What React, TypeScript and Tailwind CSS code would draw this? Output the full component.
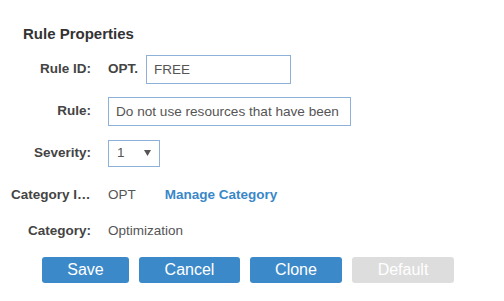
export default function App() {
    const font = { fontFamily: '"Liberation Sans", Arial, sans-serif' };

    return (
        <div className="w-[504px] h-[301px] bg-white text-[#444]" style={font}>
            <h2 className="pt-[25px] pl-[23px] h-[48px] text-[15px] leading-[18px] font-bold text-[#333]">
                Rule Properties
            </h2>

            <div className="flex flex-col pl-[11px]">
                <div className="flex items-center h-[42px]">
                    <span className="w-[80px] text-right text-[13.5px] font-bold">Rule ID:</span>
                    <span className="ml-[17px] text-[13.5px] font-bold">OPT.</span>
                    <input
                        readOnly
                        defaultValue="FREE"
                        className="ml-[8px] w-[145px] h-[29px] border border-[#8db1d8] px-[7px] text-[13.5px] text-[#555] outline-none"
                    />
                </div>

                <div className="flex items-center h-[42px]">
                    <span className="w-[80px] text-right text-[13.5px] font-bold">Rule:</span>
                    <input
                        readOnly
                        defaultValue="Do not use resources that have been"
                        className="ml-[17px] w-[243px] h-[29px] border border-[#8db1d8] px-[7px] text-[13.6px] text-[#555] outline-none"
                    />
                </div>

                <div className="flex items-center h-[42px]">
                    <span className="w-[80px] text-right text-[13.5px] font-bold">Severity:</span>
                    <div className="ml-[17px] w-[52px] h-[27px] border border-[#8db1d8] flex items-center justify-between pl-[8px] pr-[8px] text-[13.5px] text-[#555]">
                        <span>1</span>
                        <svg width="7" height="6" viewBox="0 0 7 6">
                            <path d="M0 0 L7 0 L3.5 6 Z" fill="#555" />
                        </svg>
                    </div>
                </div>

                <div className="flex items-center h-[42px]">
                    <span className="w-[80px] text-right text-[13.5px] font-bold truncate">Category ID:</span>
                    <span className="ml-[17px] text-[13.5px] text-[#555]">OPT</span>
                    <a className="ml-[29px] text-[13.5px] font-bold text-[#3a87c8]">Manage Category</a>
                </div>

                <div className="flex items-center h-[30px]">
                    <span className="w-[80px] text-right text-[13.5px] font-bold">Category:</span>
                    <span className="ml-[17px] text-[13.5px] text-[#555]">Optimization</span>
                </div>
            </div>

            <div className="flex gap-[10px] pl-[42px] mt-[11px]">
                <button className="w-[87px] h-[26px] rounded-[3px] bg-[#3c89c9] text-white text-[16px]">Save</button>
                <button className="w-[101px] h-[26px] rounded-[3px] bg-[#3c89c9] text-white text-[16px]">Cancel</button>
                <button className="w-[92px] h-[26px] rounded-[3px] bg-[#3c89c9] text-white text-[16px]">Clone</button>
                <button disabled className="w-[102px] h-[26px] rounded-[3px] bg-[#dddddd] text-white text-[16px]">Default</button>
            </div>
        </div>
    );
}
